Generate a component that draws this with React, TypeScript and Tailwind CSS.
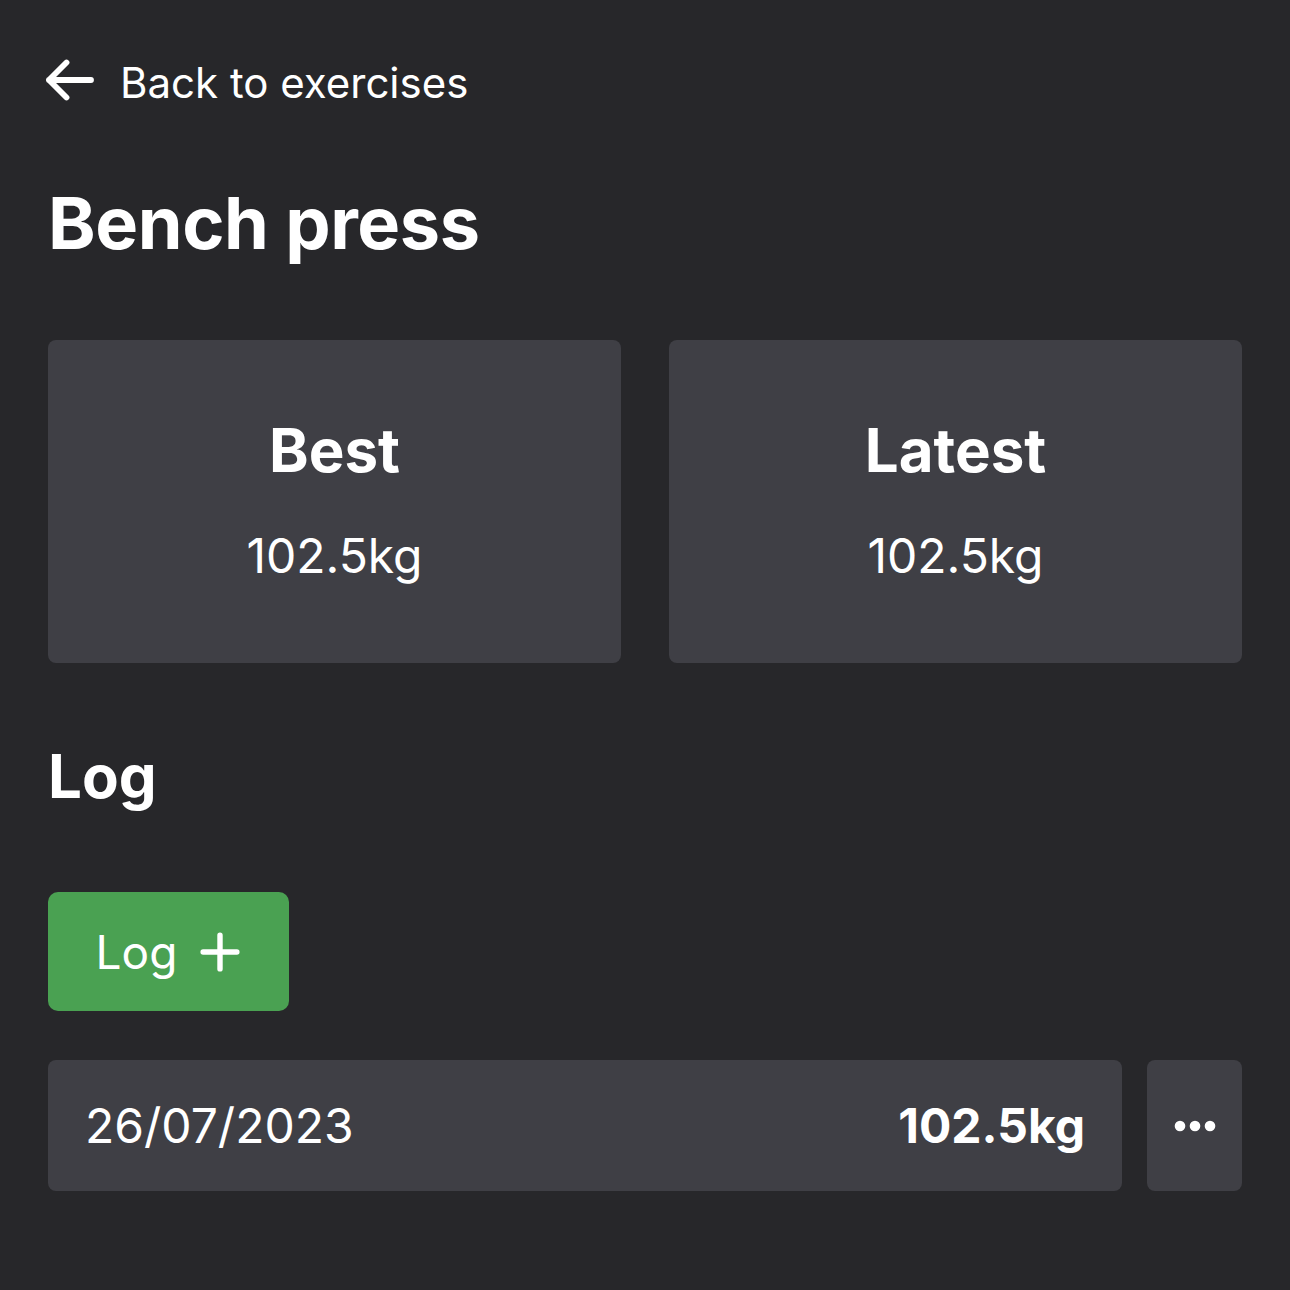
import React from 'react';

function ArrowLeft({ className }: { className?: string }) {
  return (
    <svg viewBox="0 0 24 24" fill="none" stroke="currentColor" strokeWidth={2.5} strokeLinecap="round" strokeLinejoin="round" className={className}>
      <path d="M10.5 19.5 3 12m0 0 7.5-7.5M3 12h18" />
    </svg>
  );
}

function Plus({ className }: { className?: string }) {
  return (
    <svg viewBox="0 0 24 24" fill="none" stroke="currentColor" strokeWidth={2.4} strokeLinecap="round" className={className}>
      <path d="M12 4.5v15m7.5-7.5h-15" />
    </svg>
  );
}

function Dots({ className }: { className?: string }) {
  return (
    <svg viewBox="0 0 42 12" fill="currentColor" className={className}>
      <circle cx="6" cy="6" r="5.3" />
      <circle cx="21" cy="6" r="5.3" />
      <circle cx="36" cy="6" r="5.3" />
    </svg>
  );
}

function StatCard({ label, value }: { label: string; value: string }) {
  return (
    <div className="flex h-[323px] flex-col items-center justify-center rounded-[8px] bg-[#3f3f45]">
      <div className="-mt-[4px] text-[60px] font-bold leading-none">{label}</div>
      <div className="mt-[52px] text-[48px] leading-none">{value}</div>
    </div>
  );
}

export default function App() {
  return (
    <div className="min-h-[1290px] bg-[#27272a] px-[48px] pt-[57px] text-white" style={{ fontFamily: 'Inter, "Noto Sans", sans-serif' }}>
      {/* back link */}
      <div className="flex items-center gap-[22px]">
        <ArrowLeft className="h-[56px] w-[56px] -ml-[6px] -mt-[5px]" />
        <span className="text-[42px] leading-none">Back to exercises</span>
      </div>

      <h1 className="mt-[79px] text-[72px] font-bold leading-none tracking-[-0.4px]">Bench press</h1>

      <div className="mt-[81px] grid grid-cols-2 gap-[48px]">
        <StatCard label="Best" value="102.5kg" />
        <StatCard label="Latest" value="102.5kg" />
      </div>

      <h2 className="mt-[83px] text-[60px] font-bold leading-none">Log</h2>

      <button className="mt-[86px] flex h-[119px] w-[241px] items-center justify-center gap-[16px] rounded-[10px] bg-[#4aa152] pl-[6px] text-white">
        <span className="text-[46px] leading-none">Log</span>
        <Plus className="h-[54px] w-[54px]" />
      </button>

      <div className="mt-[49px] flex gap-[25px]">
        <div className="flex h-[131px] flex-1 items-center justify-between rounded-[8px] bg-[#3f3f45] pl-[37px] pr-[37px]">
          <span className="text-[48px] leading-none">26/07/2023</span>
          <span className="text-[48px] font-bold leading-none">102.5kg</span>
        </div>
        <div className="flex h-[131px] w-[95px] items-center justify-center rounded-[8px] bg-[#3f3f45]">
          <Dots className="h-[12px] w-[42px]" />
        </div>
      </div>
    </div>
  );
}
